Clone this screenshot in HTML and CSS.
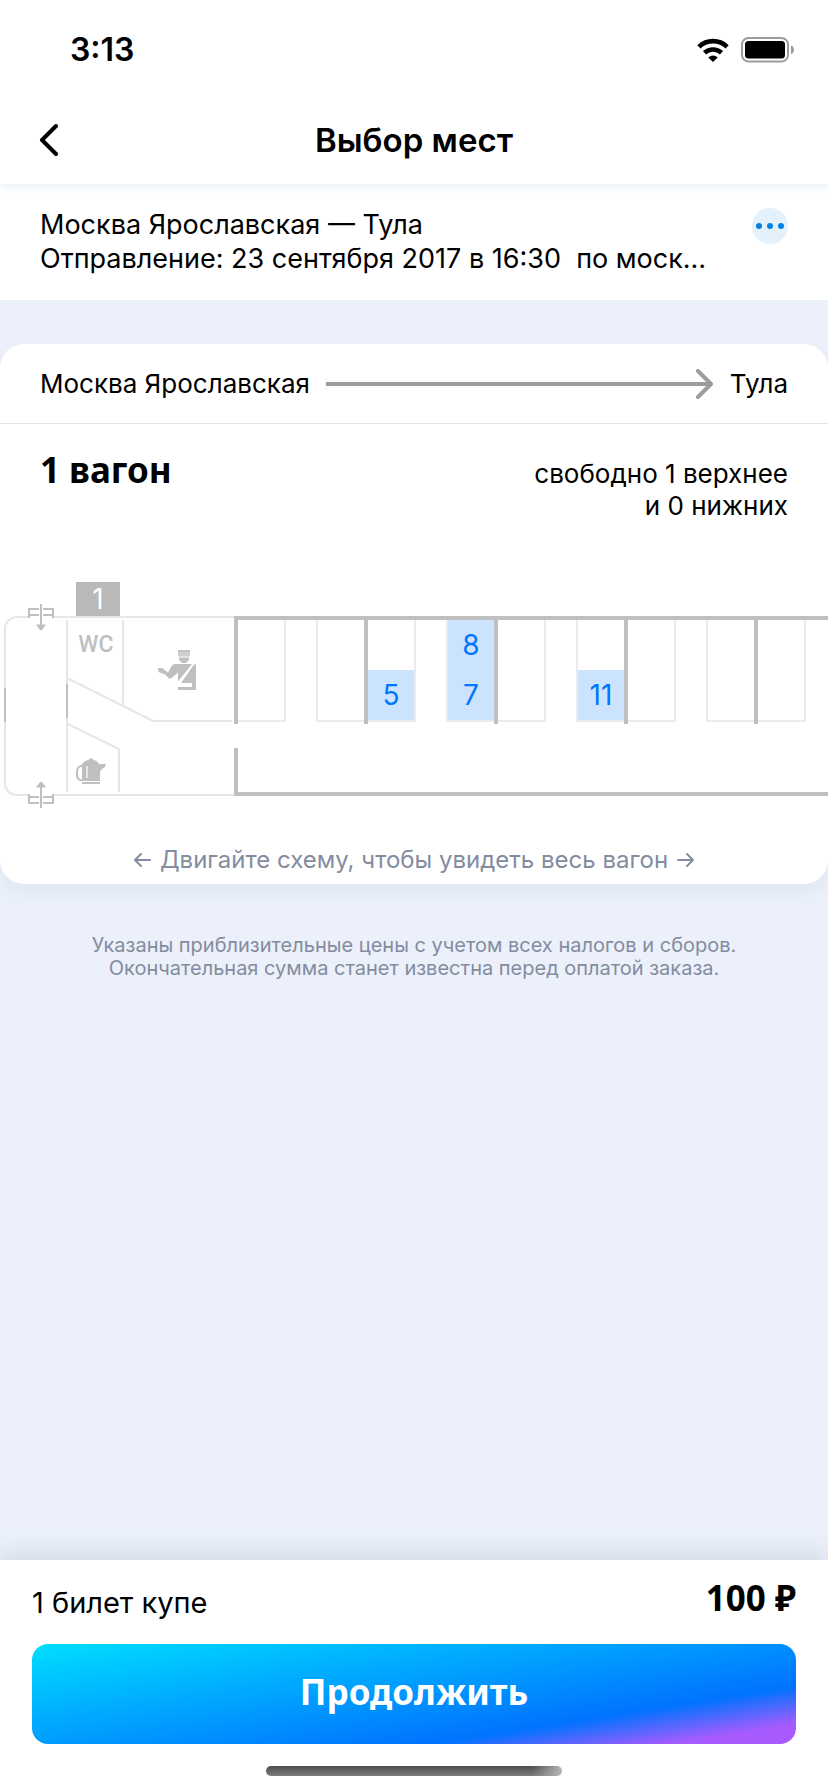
FILE: index.html
```html
<!DOCTYPE html>
<html lang="ru">
<head>
<meta charset="utf-8">
<meta name="viewport" content="width=device-width, initial-scale=1">
<title>Выбор мест</title>
<link rel="stylesheet" href="styles.css">
</head>
<body>
<header class="top">
  <div class="status">
    <time class="clock">3:13</time>
    <div class="status-icons">
      <svg width="32" height="24" viewBox="0 0 32 24" aria-hidden="true">
        <path d="M1.9 8.8a20.4 20.4 0 0 1 28.2 0" fill="none" stroke="#000" stroke-width="4.6"/>
        <path d="M7.5 14.8a12.6 12.6 0 0 1 17 0" fill="none" stroke="#000" stroke-width="4.6"/>
        <path d="M16 24l-4.7-4.6a7 7 0 0 1 9.4 0z"/>
      </svg>
      <svg width="54" height="26" viewBox="0 0 54 26" aria-hidden="true">
        <rect x="1" y="1" width="46" height="23.5" rx="6.5" fill="none" stroke="#9c9c9c" stroke-width="2"/>
        <rect x="4" y="4" width="40" height="17.5" rx="3.5"/>
        <path d="M50 8.5c4 1 4 7.500 0 8.500z" fill="#9c9c9c"/>
      </svg>
    </div>
  </div>
  <nav class="navbar">
    <button class="back" type="button" aria-label="Назад">
      <svg width="20" height="34" viewBox="0 0 20 34"><path d="M18 3L4 17l14 14" fill="none" stroke="#000" stroke-width="4" stroke-linecap="round" stroke-linejoin="round"/></svg>
    </button>
    <h1 class="title">Выбор мест</h1>
  </nav>
</header>

<section class="trip">
  <div class="trip-text">
    <p class="trip-line">Москва Ярославская — Тула</p>
    <p class="trip-line">Отправление: 23 сентября 2017 в 16:30 &nbsp;по моск…</p>
  </div>
  <button class="more" type="button" aria-label="Подробнее">
    <svg width="28" height="6" viewBox="0 0 28 6"><g fill="#0081e3"><circle cx="3" cy="3" r="3"/><circle cx="14" cy="3" r="3"/><circle cx="25" cy="3" r="3"/></g></svg>
  </button>
</section>

<main class="content">
  <section class="card">
    <div class="route">
      <span>Москва Ярославская</span>
      <span class="arrow">
        <span class="arrow-line"></span>
        <svg class="arrow-head" width="18" height="30" viewBox="0 0 18 30" aria-hidden="true"><path d="M2 2l13 13L2 28" fill="none" stroke="#9d9d9c" stroke-width="4" stroke-linecap="round" stroke-linejoin="round"/></svg>
      </span>
      <span>Тула</span>
    </div>
    <div class="wagon-head">
      <h2 class="wagon-name">1 вагон</h2>
      <p class="wagon-free">свободно 1 верхнее<br>и 0 нижних</p>
    </div>
    <div class="scheme">
      <svg class="vestibule" width="234" height="240" viewBox="0 0 234 240" aria-hidden="true">
        <g fill="none" stroke="#e6e6e6" stroke-width="2">
          <path d="M28 37H16Q12 37 8 41Q5 44 5 48V204Q5 208 8 211Q12 215 16 215H28M54 37H234M54 215H234"/>
          <path d="M67 40V212M123 40V125M68 98.500L153 141H232M68 144L119 169V212"/>
        </g>
        <path d="M5 108v34M67 104v34" fill="none" stroke="#bfbfbf" stroke-width="2"/>
        <g id="door">
          <path d="M29 38V29H39M29 35H39M53 38V29H43M53 35H43M41 24V46" fill="none" stroke="#bfbfbf" stroke-width="2"/>
          <path d="M36 44.500h10l-4 5.500h-2z" fill="#bfbfbf"/>
        </g>
        <use href="#door" transform="matrix(1 0 0 -1 0 252)"/>
        <rect x="76" y="2" width="44" height="34" fill="#b9b9b9"/>
        <text class="wagon-number" x="98" y="29" text-anchor="middle">1</text>
        <text class="wc" x="96" y="72" text-anchor="middle">WC</text>
        <g fill="#bfbfbf">
          <path d="M178 70h12v2h-12z"/>
          <path d="M178 72h12v4.500h-12z" opacity=".75"/>
          <path d="M179 77.500h10v2q-1 2-3 3.500h-4q-2-1.500-3-3.500z"/>
          <path d="M158 88h4l6 4.500 4-7q1-1.500 3-1.500h17l-13.500 17H178V92.500l-7 6h-2l-4-4-6.500-2.500z"/>
          <path d="M194 84.500h2V110h-18v-3h14v-4h-11z"/>
          <path d="M82 184q2-3 6-4l3-2 3 2q4 1 5 4z"/>
          <path d="M82 184h24l-1 3-3 2-2 3v9H82z"/>
          <path d="M82 202h18v2H82z"/>
        </g>
        <path d="M83 186h-2q-4 1-4 6v3q0 5 5 5.500" fill="none" stroke="#bfbfbf" stroke-width="2"/>
        <path d="M87 186v12" stroke="#e6e6e6" stroke-width="2"/>
      </svg>
      <div class="cabin">
        <div class="rooms">
          <div class="room"><div class="bed left"></div><div class="bed right"></div></div>
          <div class="room">
            <div class="bed left"><button class="seat" type="button">5</button></div>
            <div class="bed right"><button class="seat" type="button">8</button><button class="seat" type="button">7</button></div>
          </div>
          <div class="room">
            <div class="bed left"></div>
            <div class="bed right"><button class="seat" type="button">11</button></div>
          </div>
          <div class="room"><div class="bed left"></div><div class="bed right"></div></div>
          <div class="room"><div class="bed left"></div><div class="bed right"></div></div>
        </div>
        <div class="aisle"></div>
      </div>
    </div>
    <p class="hint">
      <svg width="18" height="16" viewBox="0 0 18 16" aria-hidden="true"><path d="M17 8H2M8 2L2 8l6 6" fill="none" stroke="#848c9f" stroke-width="2" stroke-linecap="round" stroke-linejoin="round"/></svg>
      <span>Двигайте схему, чтобы увидеть весь вагон</span>
      <svg width="18" height="16" viewBox="0 0 18 16" aria-hidden="true"><path d="M1 8h15M10 2l6 6-6 6" fill="none" stroke="#848c9f" stroke-width="2" stroke-linecap="round" stroke-linejoin="round"/></svg>
    </p>
  </section>
  <p class="note">Указаны приблизительные цены с учетом всех налогов и сборов.<br>Окончательная сумма станет известна перед оплатой заказа.</p>
</main>

<footer class="checkout">
  <div class="summary">
    <span class="tickets">1 билет купе</span>
    <strong class="price">100 ₽</strong>
  </div>
  <button class="continue" type="button">Продолжить</button>
  <div class="home-bar"></div>
</footer>
</body>
</html>
```
FILE: styles.css
```css
* {
  box-sizing: border-box;
}

body {
  margin: 0;
  min-height: 100vh;
  display: flex;
  flex-direction: column;
  background: #ebf0fa;
  color: #000;
  font-family: Inter, "Liberation Sans", sans-serif;
  font-size: 26px;
  line-height: 32px;
}

h1, h2, p {
  margin: 0;
}

button {
  border: 0;
  padding: 0;
  background: none;
  color: inherit;
  font: inherit;
  cursor: pointer;
}

svg {
  display: block;
  flex: none;
}

.top {
  position: relative;
  background: #fff;
  box-shadow: 0 4px 8px #ebf2fa;
}

.status {
  display: flex;
  justify-content: space-between;
  align-items: center;
  height: 100px;
  padding: 0 33px 0 70px;
}

.clock {
  font-size: 32px;
  font-weight: 600;
}

.status-icons {
  display: flex;
  align-items: center;
  gap: 12px;
}

.navbar {
  display: grid;
  grid-template-columns: 40px 1fr 40px;
  align-items: center;
  height: 84px;
  padding: 0 38px 4px;
}

.title {
  font-size: 33px;
  font-weight: 600;
  line-height: 40px;
  text-align: center;
}

.trip {
  display: flex;
  justify-content: space-between;
  align-items: flex-start;
  padding: 24px 40px;
  background: #fff;
}

.trip-text {
  min-width: 0;
}

.trip-line {
  overflow: hidden;
  font-size: 27px;
  line-height: 34px;
  text-overflow: ellipsis;
  white-space: nowrap;
}

.more {
  display: grid;
  place-items: center;
  flex: none;
  width: 36px;
  height: 36px;
  border-radius: 50%;
  background: #e4f1fb;
}

.content {
  flex: 1;
  padding: 44px 0;
}

.card {
  border-radius: 24px;
  background: #fff;
  box-shadow: 0 8px 16px #dfe7f2;
  clip-path: inset(0 0 -32px 0);
}

.route {
  display: flex;
  align-items: center;
  gap: 16px;
  height: 80px;
  padding: 0 40px;
  border-bottom: 1px solid #e2e2e2;
}

.arrow {
  display: flex;
  align-items: center;
  flex: 1;
}

.arrow-line {
  flex: 1;
  height: 4px;
  margin-right: -16px;
  background: #9d9d9c;
}

.wagon-head {
  display: flex;
  justify-content: space-between;
  padding: 26px 40px 0;
}

.wagon-name {
  font-family: "Noto Sans", sans-serif;
  font-size: 35px;
  font-weight: 700;
  line-height: 40px;
}

.wagon-free {
  padding-top: 8px;
  text-align: right;
}

.scheme {
  display: flex;
  margin-top: 58px;
  overflow-x: auto;
  scrollbar-width: none;
}

.wagon-number {
  fill: #fff;
  font-size: 28px;
}

.wc {
  fill: #bfbfbf;
  font-family: Roboto, sans-serif;
  font-size: 23px;
  font-weight: 500;
}

.cabin {
  flex: none;
  padding-top: 36px;
}

.rooms {
  display: flex;
  border-top: 4px solid #bfbfbf;
}

.room {
  display: flex;
  justify-content: space-between;
  width: 130px;
  height: 104px;
  border-left: 4px solid #bfbfbf;
}

.bed {
  display: flex;
  flex-direction: column;
  justify-content: flex-end;
  width: 48px;
  height: 102px;
  border: 0 solid #ebebeb;
  border-bottom-width: 2px;
}

.left {
  border-right-width: 2px;
}

.right {
  border-left-width: 2px;
}

.seat {
  height: 50px;
  background: #cce3ff;
  color: #0076ff;
  font-size: 28px;
}

.aisle {
  height: 48px;
  margin-top: 24px;
  border: solid #bfbfbf;
  border-width: 0 0 4px 4px;
}

.hint {
  display: flex;
  justify-content: center;
  align-items: center;
  gap: 9px;
  padding: 24px 40px 8px;
  color: #848c9f;
  font-size: 24px;
}

.note {
  padding: 50px 40px 0;
  color: #848c9f;
  font-size: 20px;
  line-height: 23px;
  text-align: center;
}

.checkout {
  position: relative;
  padding: 18px 32px 16px;
  background: #fff;
  box-shadow: 0 -4px 24px #ccd5e2;
}

.summary {
  display: flex;
  justify-content: space-between;
  align-items: flex-start;
  height: 66px;
}

.tickets {
  padding-top: 8px;
  font-size: 29px;
  line-height: 34px;
}

.price {
  font-family: "Noto Sans", sans-serif;
  font-size: 35px;
  line-height: 40px;
}

.continue {
  display: block;
  width: 100%;
  height: 100px;
  padding-bottom: 4px;
  border-radius: 16px;
  background: linear-gradient(171deg, #00dbff 2%, #0073ff 74%, #a75bff 91%);
  color: #fff;
  font-family: "Noto Sans", sans-serif;
  font-size: 35px;
  font-weight: 700;
}

.home-bar {
  width: 296px;
  height: 10px;
  margin: 22px auto 0;
  border-radius: 5px;
  background: linear-gradient(90deg, transparent 90%, #b5b5b5), linear-gradient(#4d4d4d, #7c7c7c);
}
```
